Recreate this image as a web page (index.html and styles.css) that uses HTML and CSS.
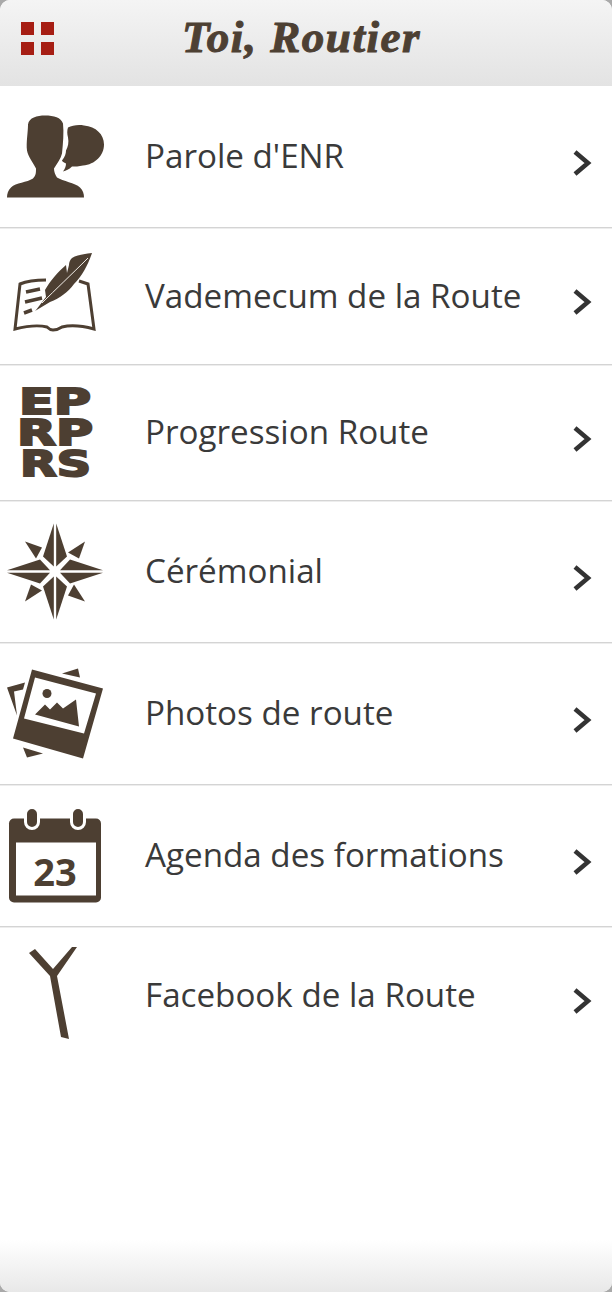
FILE: index.html
```html
<!DOCTYPE html>
<html lang="fr">
<head>
    <meta charset="UTF-8">
    <meta name="viewport" content="width=device-width, initial-scale=1.0">
    <title>Toi, Routier</title>
    <link rel="stylesheet" href="styles.css">
</head>
<body>

    <div class="page">
        <header class="topbar">
            <div class="menu-btn"><span></span><span></span><span></span><span></span></div>
            <h1 class="title">Toi, Routier</h1>
        </header>

        <ul class="menu">
            <li class="row row-tall">
                <svg class="icon" viewBox="0 96.5 112 120">
                    <path d="M45 115C37 115 29 117 28 124C28 132 26 142 27 150C28 156 33 162 36 168C36 172 36 175 33 178C27 182 16 182 11 187C8 190 7 193 7 197H84C84 193 83 190 80 187C75 182 63 181 57 177C55 174 54 171 54 168C57 163 61 158 62 153C63 143 64 132 63 123C61 117 54 115 45 115Z"/>
                    <path d="M68 127C72 125 78 124 84 125C96 126 104 134 104 144C104 155 95 164 83 165C79 166 75 166 72 166C69 169 66 170 63 171C65 168 66 166 66 163C64 162 62 161 62 160C65 156 66 153 66 150C68 146 69 142 68 137C67 133 67 130 68 127Z"/>
                </svg>
                <span class="label">Parole d'ENR</span>
                <svg class="chevron" viewBox="0 0 20 28"><path d="M3 3L16 14L3 25"/></svg>
            </li>
            <li class="row row-mid">
                <svg class="icon" viewBox="0 236 112 120">
                    <path class="book" d="M46 280C36 280 27 281 20 284L15 329C27 326 39 325 47 327C49 329 51 330 53 330C56 330 59 329 62 327C70 325 83 326 94 329L88 284C85 283 82 282 79 281"/>
                    <path class="book-line" d="M26 292L40 289M25 302L42 298M24 313L32 310"/>
                    <path d="M92 253C84 254 77 255 72 258C70 260 69 262 69 265L67 273L66 265C58 272 50 281 45 290L46 297L36 310L35 311L50 302C60 298 68 292 74 284C82 276 88 265 92 253Z"/>
                    <path class="quill" d="M88 258C72 274 55 290 42 303"/>
                </svg>
                <span class="label">Vademecum de la Route</span>
                <svg class="chevron" viewBox="0 0 20 28"><path d="M3 3L16 14L3 25"/></svg>
            </li>
            <li class="row row-short">
                <svg class="icon" viewBox="0 372.5 112 120">
                    <text class="block-text" x="19" y="413" textLength="72" lengthAdjust="spacingAndGlyphs">EP</text>
                    <text class="block-text" x="17" y="444" textLength="76" lengthAdjust="spacingAndGlyphs">RP</text>
                    <text class="block-text" x="20" y="475" textLength="71" lengthAdjust="spacingAndGlyphs">RS</text>
                </svg>
                <span class="label">Progression Route</span>
                <svg class="chevron" viewBox="0 0 20 28"><path d="M3 3L16 14L3 25"/></svg>
            </li>
            <li class="row row-tall">
                <svg class="icon" viewBox="0 511.5 112 120">
                    <g transform="translate(55 571)">
                        <g id="star-arm">
                            <path d="M-1.2 -48L-12 -15L-1.2 -5Z"/>
                            <path d="M1.2 -48L12 -15L1.2 -5Z"/>
                            <path d="M-30 -30L-13 -24L-19 -13Z"/>
                        </g>
                        <use href="#star-arm" transform="rotate(90)"/>
                        <use href="#star-arm" transform="rotate(180)"/>
                        <use href="#star-arm" transform="rotate(270)"/>
                    </g>
                </svg>
                <span class="label">Cérémonial</span>
                <svg class="chevron" viewBox="0 0 20 28"><path d="M3 3L16 14L3 25"/></svg>
            </li>
            <li class="row row-tall">
                <svg class="icon" viewBox="0 653.5 112 120">
                    <path d="M7 687L25 682L23 689L14 691L17 715Z"/>
                    <path d="M62 673L78 668L80 677Z"/>
                    <path d="M23 747L43 753L27 757Z"/>
                    <path fill-rule="evenodd" d="M32 669L103 688L83 758L13 738ZM35 677L24 718L84 733L96 693Z"/>
                    <circle cx="47" cy="693" r="4.5"/>
                    <path d="M35 714L45 704L50 709L57 702L63 708L76 699L79 726Z"/>
                </svg>
                <span class="label">Photos de route</span>
                <svg class="chevron" viewBox="0 0 20 28"><path d="M3 3L16 14L3 25"/></svg>
            </li>
            <li class="row row-tall">
                <svg class="icon" viewBox="0 795.5 112 120">
                    <rect x="9" y="818" width="92" height="84" rx="5"/>
                    <rect class="cal-page" x="16" y="842" width="80" height="53"/>
                    <rect class="cal-ring" x="25.5" y="807" width="13" height="21" rx="6.5"/>
                    <rect class="cal-ring" x="71.5" y="807" width="13" height="21" rx="6.5"/>
                    <text class="cal-day" x="55" y="885">23</text>
                </svg>
                <span class="label">Agenda des formations</span>
                <svg class="chevron" viewBox="0 0 20 28"><path d="M3 3L16 14L3 25"/></svg>
            </li>
            <li class="row row-last">
                <svg class="icon" viewBox="0 935 112 120">
                    <path d="M29 953L35 949L53 969L72 947L77 947L57 976L69 1039L61 1037L50 976Z"/>
                </svg>
                <span class="label">Facebook de la Route</span>
                <svg class="chevron" viewBox="0 0 20 28"><path d="M3 3L16 14L3 25"/></svg>
            </li>
        </ul>

        <footer class="bottombar"></footer>
    </div>

</body>
</html>
```

FILE: styles.css
```css
html {
    background-color: #a9a9a9;
}

body {
    margin: 0;
    font-family: "Open Sans", Arial, sans-serif;
    color: #3a3a3a;
}

.page {
    display: flex;
    flex-direction: column;
    height: 1292px;
    background: #fff;
    border-radius: 10px;
    overflow: hidden;
}

.topbar {
    display: flex;
    align-items: center;
    flex: 0 0 86px;
    background: linear-gradient(#f4f4f4, #e3e3e3);
}

.menu-btn {
    display: grid;
    grid-template-columns: 13px 13px;
    grid-auto-rows: 13px;
    gap: 7px;
    margin: 0 0 10px 21px;
}

.menu-btn span {
    background-color: #a61e14;
}

.title {
    margin: 0 0 12px 128px;
    font-family: "Liberation Serif", serif;
    font-size: 45px;
    font-style: italic;
    font-weight: bold;
    letter-spacing: 1.5px;
    color: #4d4033;
    -webkit-text-stroke: 1px #4d4033;
}

.menu {
    flex: 1;
    margin: 0;
    padding: 0;
    list-style: none;
}

.row {
    display: flex;
    align-items: center;
    box-sizing: border-box;
    border-bottom: 1px solid #d4d4d4;
    box-shadow: 0 1px 0 #ededed;
}

.row-tall { height: 142px; }
.row-mid { height: 137px; }
.row-short { height: 136px; }
.row-last { height: 136px; border-bottom: 0; box-shadow: none; }

.icon {
    flex: 0 0 112px;
    height: 120px;
    margin-right: 33px;
    fill: #4d3f32;
}

.label {
    flex: 1;
    margin-top: -2px;
    font-size: 33.2px;
}

.chevron {
    flex: 0 0 20px;
    height: 28px;
    margin: 12px 20px 0 0;
    fill: none;
    stroke: #333;
    stroke-width: 4.5;
}

.book {
    fill: none;
    stroke: #4d3f32;
    stroke-width: 3;
}

.book-line {
    fill: none;
    stroke: #4d3f32;
    stroke-width: 3.5;
}

.quill {
    fill: none;
    stroke: #f2eee8;
    stroke-width: 1;
}

.block-text {
    font-family: "DejaVu Sans", sans-serif;
    font-size: 36px;
    font-weight: bold;
    stroke: #4d3f32;
    stroke-width: 2;
}

.cal-page {
    fill: #fff;
}

.cal-ring {
    stroke: #fff;
    stroke-width: 3;
}

.cal-day {
    font-family: "Open Sans", sans-serif;
    font-size: 38px;
    font-weight: bold;
    text-anchor: middle;
}

.bottombar {
    flex: 0 0 52px;
    background: linear-gradient(#fff, #e8e8e8);
}
```
